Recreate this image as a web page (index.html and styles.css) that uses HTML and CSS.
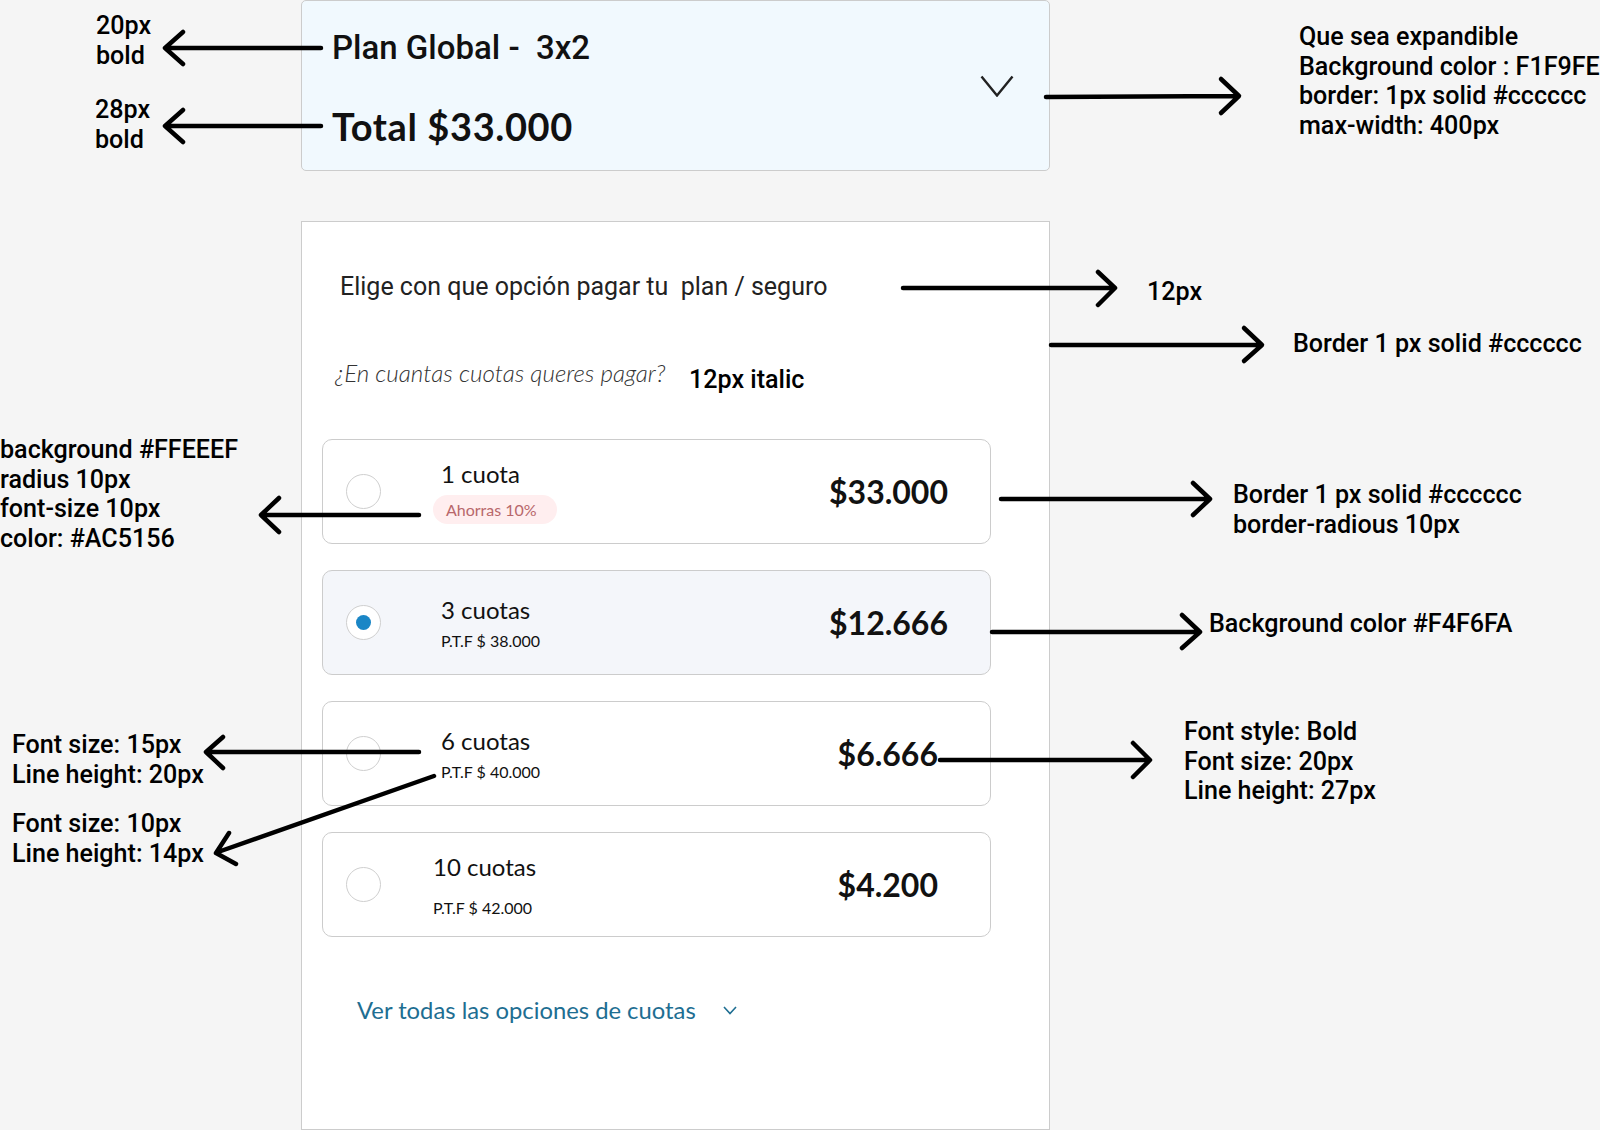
FILE: index.html
```html
<!DOCTYPE html>
<html lang="es">
<head>
<meta charset="utf-8">
<title>Plan Global - cuotas</title>
<link rel="stylesheet" href="styles.css">
</head>
<body>
<main class="canvas">
  <section class="ui">
    <div class="summary">
      <div class="summary__text">
        <h1 class="summary__plan">Plan Global -  3x2</h1>
        <p class="summary__total">Total $33.000</p>
      </div>
      <svg class="summary__chevron" viewBox="0 0 34 22"><polyline points="1.5,1.5 17,20.5 32.5,1.5"/></svg>
    </div>

    <div class="pay">
      <h2 class="pay__title">Elige con que opción pagar tu  plan / seguro</h2>
      <p class="pay__question">¿En cuantas cuotas queres pagar?</p>
      <ul class="options">
        <li class="option">
          <span class="radio"></span>
          <div class="option__info">
            <span class="option__name">1 cuota</span>
            <span class="badge">Ahorras 10%</span>
          </div>
          <span class="option__price">$33.000</span>
        </li>
        <li class="option option--selected">
          <span class="radio radio--on"></span>
          <div class="option__info">
            <span class="option__name">3 cuotas</span>
            <span class="option__sub">P.T.F $ 38.000</span>
          </div>
          <span class="option__price">$12.666</span>
        </li>
        <li class="option option--inset">
          <span class="radio"></span>
          <div class="option__info">
            <span class="option__name">6 cuotas</span>
            <span class="option__sub">P.T.F $ 40.000</span>
          </div>
          <span class="option__price">$6.666</span>
        </li>
        <li class="option option--inset option--loose">
          <span class="radio"></span>
          <div class="option__info">
            <span class="option__name">10 cuotas</span>
            <span class="option__sub">P.T.F $ 42.000</span>
          </div>
          <span class="option__price">$4.200</span>
        </li>
      </ul>
      <a class="more" href="#">Ver todas las opciones de cuotas<svg class="more__chevron" viewBox="0 0 14 9"><polyline points="1,1 7,7.5 13,1"/></svg></a>
    </div>
  </section>

  <svg class="arrows" viewBox="0 0 1600 1130">
    <path d="M321 48 H167 M183 32 L165 48 L183 64"/>
    <path d="M321 126 H167 M183 110 L165 126 L183 142"/>
    <path d="M1046 97 L1238 96 M1221 79 L1239 96 L1221 113"/>
    <path d="M903 288 H1113 M1098 272 L1115 288 L1098 305"/>
    <path d="M1051 345 H1260 M1244 328 L1262 345 L1244 361"/>
    <path d="M419 515 H263 M279 498 L261 515 L279 532"/>
    <path d="M1001 499 H1208 M1193 483 L1210 499 L1193 515"/>
    <path d="M992 632 H1198 M1182 615 L1200 632 L1182 648"/>
    <path d="M419 752 H208 M223 737 L206 752 L223 768"/>
    <path d="M434 776 L218 852 M229 833 L216 853 L236 864"/>
    <path d="M940 760 H1148 M1133 743 L1150 760 L1133 777"/>
  </svg>

  <p class="note note--plan">20px<br>bold</p>
  <p class="note note--total">28px<br>bold</p>
  <p class="note note--summary">Que sea expandible<br>Background color : F1F9FE<br>border: 1px solid #cccccc<br>max-width: 400px</p>
  <p class="note note--title">12px</p>
  <p class="note note--card">Border 1 px solid #cccccc</p>
  <p class="note note--question">12px italic</p>
  <p class="note note--badge">background #FFEEEF<br>radius 10px<br>font-size 10px<br>color: #AC5156</p>
  <p class="note note--option">Border 1 px solid #cccccc<br>border-radious 10px</p>
  <p class="note note--selected">Background color #F4F6FA</p>
  <p class="note note--name">Font size: 15px<br>Line height: 20px</p>
  <p class="note note--sub">Font size: 10px<br>Line height: 14px</p>
  <p class="note note--price">Font style: Bold<br>Font size: 20px<br>Line height: 27px</p>
</main>
</body>
</html>
```

FILE: styles.css
```css
* { box-sizing: border-box; }

html, body {
  margin: 0;
  padding: 0;
}

body {
  background: #f5f5f5;
  font-family: "Lato", "Liberation Sans", sans-serif;
  color: #111;
  overflow: hidden;
}

.canvas {
  position: relative;
  width: 1600px;
  height: 1130px;
  overflow: hidden;
}

/* ---------- UI column ---------- */
.ui {
  margin-left: 301px;
  width: 749px;
}

.summary {
  display: flex;
  align-items: center;
  height: 171px;
  padding: 0 35px 0 30px;
  background: #F1F9FE;
  border: 1px solid #cccccc;
  border-radius: 5px;
}

.summary__text {
  flex: 1;
  align-self: flex-start;
  padding-top: 27px;
}

.summary__plan {
  margin: 0;
  font-family: "Roboto", "Liberation Sans", sans-serif;
  font-weight: 500;
  font-size: 33px;
  line-height: 40px;
  white-space: pre;
  color: #111;
}

.summary__total {
  margin: 35px 0 0;
  font-family: "Lato", "Liberation Sans", sans-serif;
  font-weight: 700;
  font-size: 38px;
  line-height: 46px;
  letter-spacing: 0.6px;
  color: #111;
}

.summary__chevron {
  width: 34px;
  height: 22px;
  flex: none;
  fill: none;
  stroke: #222;
  stroke-width: 2.4;
}

.pay {
  margin-top: 50px;
  height: 909px;
  padding: 50px 58px 0 20px;
  background: #fff;
  border: 1px solid #cccccc;
}

.pay__title {
  margin: 0 0 0 18px;
  font-family: "Roboto", "Liberation Sans", sans-serif;
  font-weight: 400;
  font-size: 25px;
  line-height: 30px;
  color: #222;
  white-space: pre;
}

.pay__question {
  margin: 57px 0 0 13px;
  font-family: "Lato", "Liberation Sans", sans-serif;
  font-style: italic;
  font-weight: 300;
  font-size: 24.2px;
  line-height: 28px;
  color: #333;
}

.options {
  list-style: none;
  margin: 52px 0 0;
  padding: 0;
  display: flex;
  flex-direction: column;
  gap: 26px;
}

.option {
  display: flex;
  align-items: center;
  height: 105px;
  padding: 0 42px 0 23px;
  background: #fff;
  border: 1px solid #cccccc;
  border-radius: 10px;
}

.option--selected { background: #F4F6FA; }
.option--inset { padding-right: 52px; }

.radio {
  flex: none;
  width: 35px;
  height: 35px;
  border-radius: 50%;
  border: 1.5px solid #cfcfcf;
  background: #fff;
  display: flex;
  align-items: center;
  justify-content: center;
}

.radio--on::after {
  content: "";
  width: 15px;
  height: 15px;
  border-radius: 50%;
  background: #1a86c6;
}

.option__info {
  flex: 1;
  margin-left: 60px;
  display: flex;
  flex-direction: column;
  align-items: flex-start;
  gap: 6px;
}

.option--loose .option__info {
  margin-left: 52px;
  gap: 16px;
}

.option__name {
  font-size: 24px;
  line-height: 30px;
  color: #111;
}

.option__sub {
  font-size: 16px;
  line-height: 20px;
  color: #111;
}

.badge {
  margin-left: -8px;
  font-size: 16px;
  line-height: 29px;
  padding: 0 20px 0 13px;
  background: #FFEEEF;
  color: #b8676b;
  border-radius: 15px;
}

.option__price {
  font-weight: 700;
  font-size: 32px;
  line-height: 40px;
  color: #111;
}

.more {
  display: inline-flex;
  align-items: center;
  gap: 27px;
  margin: 58px 0 0 35px;
  font-size: 23.8px;
  line-height: 30px;
  color: #1e6e92;
  text-decoration: none;
}

.more__chevron {
  width: 14px;
  height: 9px;
  fill: none;
  stroke: #1e6e92;
  stroke-width: 1.6;
}

/* ---------- Annotation layer ---------- */
.arrows {
  position: absolute;
  left: 0;
  top: 0;
  width: 1600px;
  height: 1130px;
  fill: none;
  stroke: #000;
  stroke-width: 4.5;
  stroke-linecap: round;
  stroke-linejoin: round;
  pointer-events: none;
}

.note {
  position: absolute;
  margin: 0;
  font-family: "Roboto", "Liberation Sans", sans-serif;
  font-weight: 500;
  font-size: 25.1px;
  line-height: 29.5px;
  color: #000;
  white-space: nowrap;
}

.note--plan     { left: 96px;   top: 11px; }
.note--total    { left: 95px;   top: 95px; }
.note--summary  { left: 1299px; top: 22px; }
.note--title    { left: 1147px; top: 277px; }
.note--card     { left: 1293px; top: 329px; }
.note--question { left: 689px;  top: 365px; }
.note--badge    { left: 0;      top: 435px; }
.note--option   { left: 1233px; top: 480px; }
.note--selected { left: 1209px; top: 609px; }
.note--name     { left: 12px;   top: 730px; }
.note--sub      { left: 12px;   top: 809px; }
.note--price    { left: 1184px; top: 717px; }
```
